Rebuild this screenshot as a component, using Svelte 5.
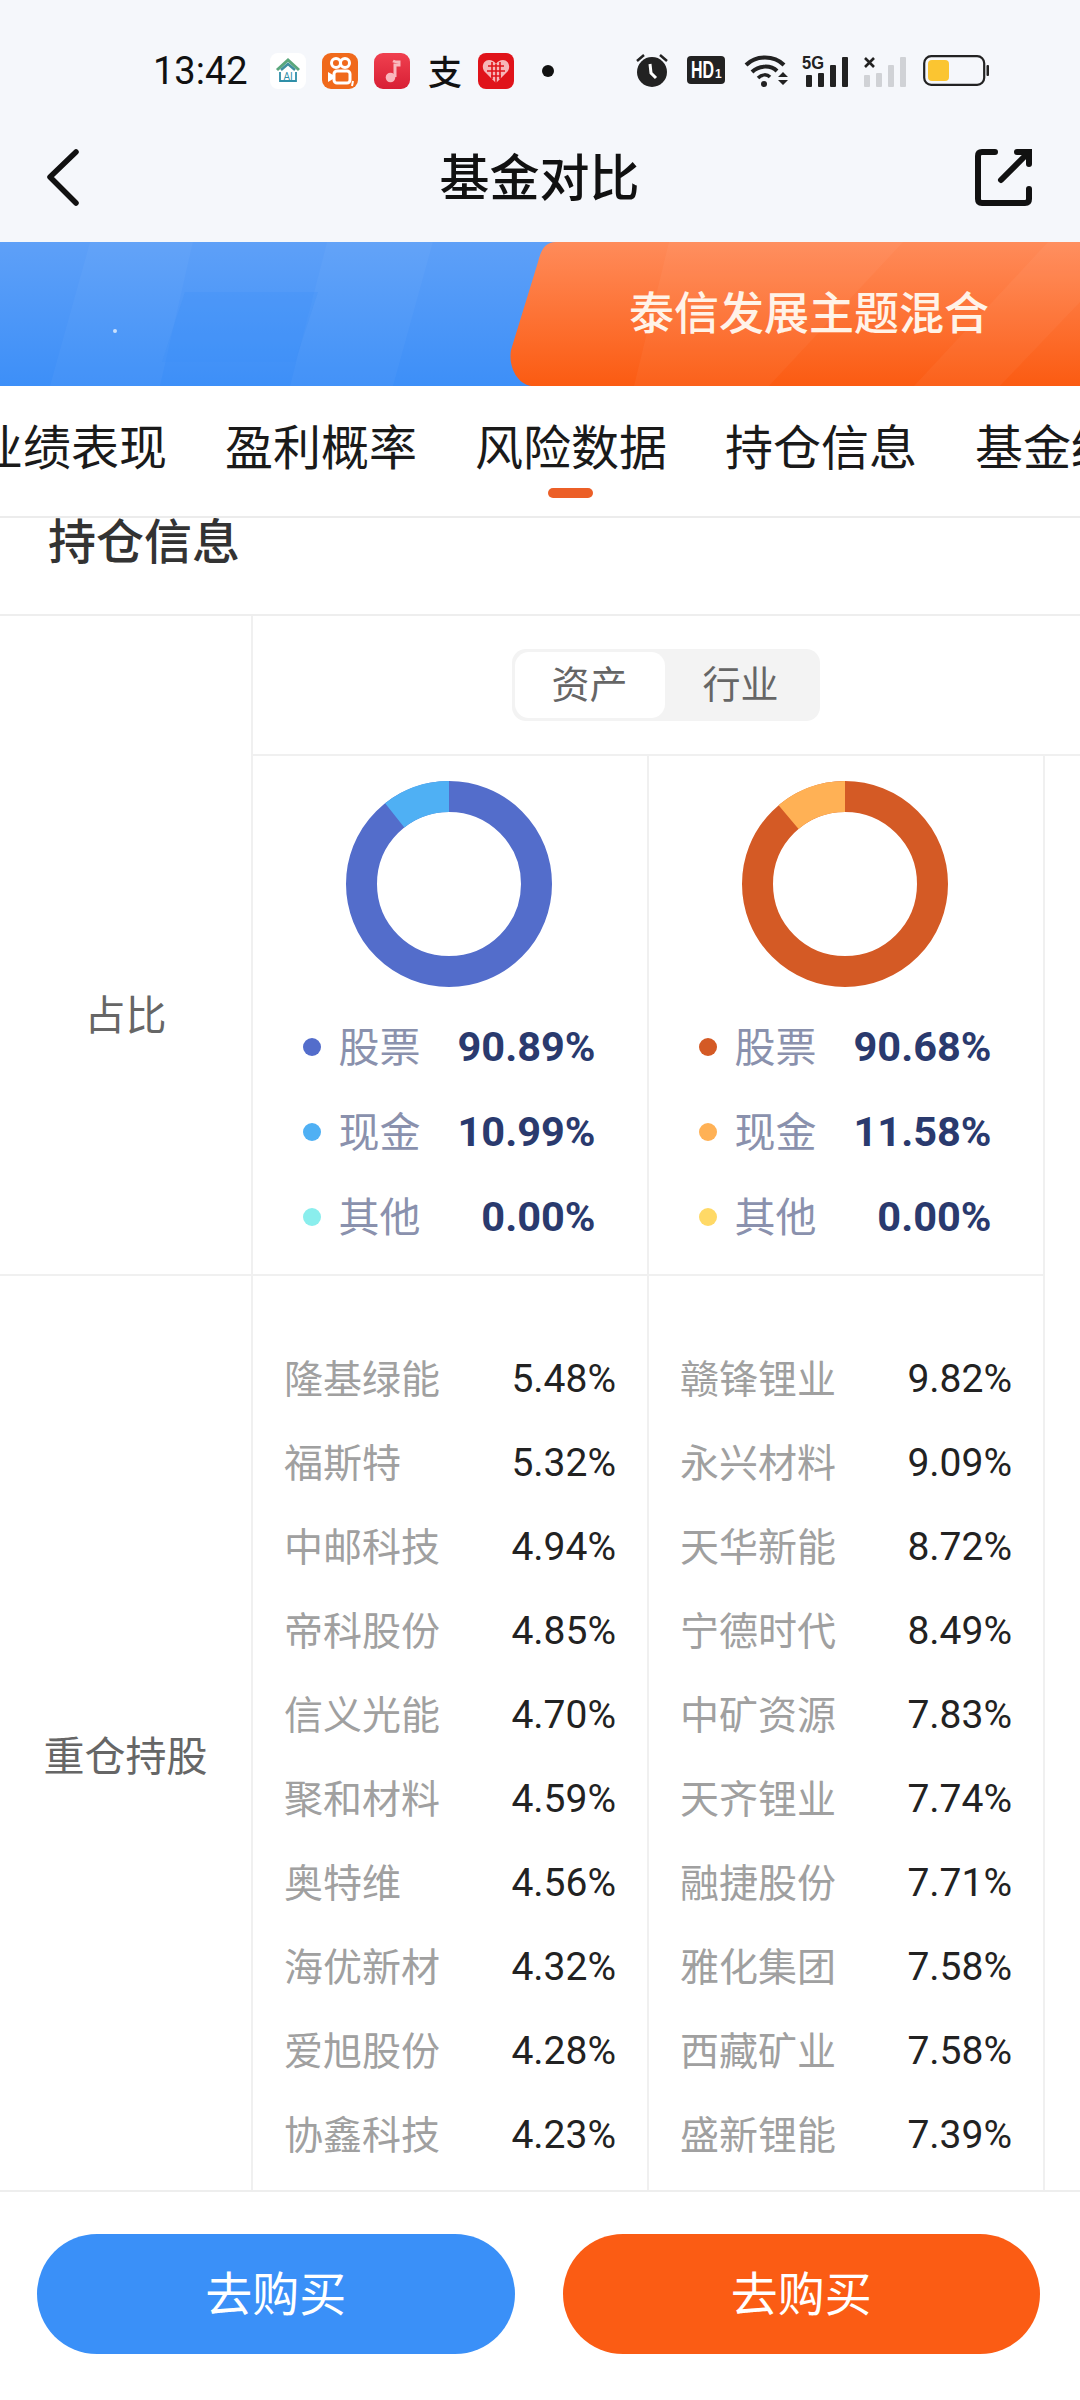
<script>
  const tabs = ['业绩表现', '盈利概率', '风险数据', '持仓信息', '基金经理'];

  const funds = [
    {
      colors: ['#536dcb', '#4fb0f4', '#8aeeed'],
      cashShare: 0.108,
      legend: [
        { name: '股票', value: '90.89%' },
        { name: '现金', value: '10.99%' },
        { name: '其他', value: '0.00%' }
      ],
      holdings: [
        ['隆基绿能', '5.48%'],
        ['福斯特', '5.32%'],
        ['中邮科技', '4.94%'],
        ['帝科股份', '4.85%'],
        ['信义光能', '4.70%'],
        ['聚和材料', '4.59%'],
        ['奥特维', '4.56%'],
        ['海优新材', '4.32%'],
        ['爱旭股份', '4.28%'],
        ['协鑫科技', '4.23%']
      ]
    },
    {
      colors: ['#d45a25', '#ffb155', '#ffd966'],
      cashShare: 0.113,
      legend: [
        { name: '股票', value: '90.68%' },
        { name: '现金', value: '11.58%' },
        { name: '其他', value: '0.00%' }
      ],
      holdings: [
        ['赣锋锂业', '9.82%'],
        ['永兴材料', '9.09%'],
        ['天华新能', '8.72%'],
        ['宁德时代', '8.49%'],
        ['中矿资源', '7.83%'],
        ['天齐锂业', '7.74%'],
        ['融捷股份', '7.71%'],
        ['雅化集团', '7.58%'],
        ['西藏矿业', '7.58%'],
        ['盛新锂能', '7.39%']
      ]
    }
  ];

  const radius = 87.5;
  const circumference = 2 * Math.PI * radius;
</script>

<div class="page">
  <div class="status">
    <span class="time">13:42</span>
    <div class="notif">
      <svg width="36" height="36" viewBox="0 0 36 36">
        <rect width="36" height="36" rx="8" fill="#fff" />
        <path d="M7 17 L18 7 L29 17" fill="none" stroke="#5aa77c" stroke-width="3" />
        <path d="M11 17 L18 11 L25 17" fill="none" stroke="#3f8f9f" stroke-width="2.5" />
        <path d="M10 19 V28 H26 V19" fill="none" stroke="#2f8fa8" stroke-width="1.8" />
        <text x="18" y="27" text-anchor="middle" class="ai">AI</text>
      </svg>
      <svg width="36" height="36" viewBox="0 0 36 36">
        <rect width="36" height="36" rx="9" fill="#f0691b" />
        <circle cx="14" cy="10" r="4.5" fill="none" stroke="#fff" stroke-width="3" />
        <circle cx="23" cy="10" r="4.5" fill="none" stroke="#fff" stroke-width="3" />
        <rect x="12" y="18" width="16" height="12" rx="3" fill="none" stroke="#fff" stroke-width="3" />
        <path d="M11 22 L6 19 V29 L11 26Z" fill="#fff" />
        <path d="M31 28 L30 33" stroke="#fff" stroke-width="2" />
      </svg>
      <svg width="36" height="36" viewBox="0 0 36 36">
        <defs>
          <linearGradient id="music" x1="0" y1="0" x2="0" y2="1">
            <stop offset="0" stop-color="#f0404f" />
            <stop offset="1" stop-color="#d81f35" />
          </linearGradient>
        </defs>
        <rect width="36" height="36" rx="9" fill="url(#music)" />
        <path d="M19 8 C21 9 24 9 25 9 V12 L21 12 V24" fill="none" stroke="#f9b7bd" stroke-width="3" />
        <circle cx="16.5" cy="24.5" r="4.8" fill="#f9b7bd" />
      </svg>
      <span class="pay">支</span>
      <svg width="36" height="36" viewBox="0 0 36 36">
        <rect width="36" height="36" rx="8" fill="#e0131a" />
        <path d="M18 30 L6 18 C3 13 6 7 11 7 C14 7 16 8 18 11 C20 8 22 7 25 7 C30 7 33 13 30 18Z" fill="#f6b6b8" />
        <path d="M10 13 H26 M9 18 H27 M13 23 H23 M14 9 V26 M18 11 V30 M22 9 V26" stroke="#e0131a" stroke-width="1.6" />
      </svg>
      <i class="dot"></i>
    </div>
    <div class="sys">
      <svg width="32" height="34" viewBox="0 0 32 34">
        <circle cx="16" cy="19" r="15" fill="#222" />
        <path d="M1 8 L8 2 M31 8 L24 2" stroke="#222" stroke-width="2.5" />
        <path d="M14 11 L15 20 L20 25" fill="none" stroke="#fff" stroke-width="3" />
      </svg>
      <svg class="hd" width="38" height="28" viewBox="0 0 38 28">
        <rect width="38" height="28" rx="4" fill="#222" />
        <text x="4" y="22" class="hd-main" textLength="23" lengthAdjust="spacingAndGlyphs">HD</text>
        <text x="28" y="22" class="hd-sub">1</text>
      </svg>
      <svg class="wifi" width="44" height="34" viewBox="0 0 44 34">
        <path d="M2 12 C12 2 30 2 40 12" fill="none" stroke="#222" stroke-width="4" />
        <path d="M8 19 C15 12 27 12 33 18" fill="none" stroke="#222" stroke-width="4" />
        <path d="M14 25 C18 21 23 21 26 24" fill="none" stroke="#222" stroke-width="3.5" />
        <circle cx="20" cy="31" r="3" fill="#222" />
        <path d="M34 24 H44 L39 19Z M34 27 H44 L39 32Z" fill="#222" />
      </svg>
      <svg width="46" height="34" viewBox="0 0 46 34">
        <text x="0" y="16" class="g5" textLength="22" lengthAdjust="spacingAndGlyphs">5G</text>
        <rect x="4" y="22" width="6" height="12" rx="1" fill="#222" />
        <rect x="16" y="20" width="6" height="14" rx="1" fill="#222" />
        <rect x="28" y="12" width="6" height="22" rx="1" fill="#222" />
        <rect x="40" y="4" width="6" height="30" rx="1" fill="#222" />
      </svg>
      <svg width="43" height="34" viewBox="0 0 43 34">
        <path d="M1 5 L10 14 M10 5 L1 14" stroke="#222" stroke-width="2.6" />
        <rect x="0" y="22" width="6" height="12" rx="1" fill="#d0d2d6" />
        <rect x="12" y="20" width="6" height="14" rx="1" fill="#d0d2d6" />
        <rect x="24" y="12" width="6" height="22" rx="1" fill="#d0d2d6" />
        <rect x="36" y="4" width="6" height="30" rx="1" fill="#d0d2d6" />
      </svg>
      <svg width="66" height="31" viewBox="0 0 66 31">
        <rect x="1.2" y="1.2" width="60" height="28.6" rx="7" fill="none" stroke="#222" stroke-width="2.2" />
        <rect x="5" y="5" width="21" height="21" rx="4" fill="#fbc531" />
        <rect x="63.5" y="10" width="2.5" height="11" rx="1" fill="#222" />
      </svg>
    </div>
  </div>

  <div class="nav">
    <svg width="34" height="58" viewBox="0 0 34 58">
      <path d="M30 4 L4 29 L30 55" fill="none" stroke="#111" stroke-width="5.5" stroke-linecap="round" stroke-linejoin="round" />
    </svg>
    <h1>基金对比</h1>
    <svg class="share" width="58" height="58" viewBox="0 0 58 58">
      <path d="M20 4 H7 Q3 4 3 8 V51 Q3 55 7 55 H50 Q54 55 54 51 V41" fill="none" stroke="#111" stroke-width="6" stroke-linecap="round" />
      <path d="M26 32 L52 6 M42 4 H54 V16" fill="none" stroke="#111" stroke-width="6" stroke-linecap="round" />
    </svg>
  </div>

  <div class="banner">
    <svg class="banner-bg" viewBox="0 0 1080 144" width="1080" height="144">
      <defs>
        <linearGradient id="blue" x1="0" y1="0" x2="0" y2="1">
          <stop offset="0" stop-color="#5ea0f8" />
          <stop offset="1" stop-color="#3d8ff8" />
        </linearGradient>
        <linearGradient id="orange" x1="0" y1="0" x2="0" y2="1">
          <stop offset="0" stop-color="#ff8b5a" />
          <stop offset="1" stop-color="#fb5b12" />
        </linearGradient>
      </defs>
      <rect width="1080" height="144" fill="url(#blue)" />
      <path d="M90 0 H193 L160 144 H50Z M327 0 H433 L393 144 H290Z" fill="#fff" opacity="0.03" />
      <path d="M162 120 H295 L318 50 H185Z" fill="#3d8ff8" opacity="0.25" />
      <circle cx="115" cy="89" r="2" fill="#fff" opacity="0.7" />
      <path d="M556 0 H1080 V144 H534 C518 144 508 125 511 108 L538 20 C541 8 545 0 556 0Z" fill="url(#orange)" />
      <path d="M669 0 H903 L769 144 H634Z M1048 0 H1080 V60 L1000 144 H914Z" fill="#fff" opacity="0.04" />
    </svg>
    <span class="banner-name">泰信发展主题混合</span>
  </div>

  <div class="tabs">
    {#each tabs as tab, i}
      <div class="tab" class:active={i === 2}>{tab}</div>
    {/each}
  </div>

  <div class="body">
    <div class="section-title">持仓信息</div>

    <div class="grid">
      <div class="head"></div>
      <div class="toggle-cell">
        <div class="toggle">
          <span class="on">资产</span>
          <span>行业</span>
        </div>
      </div>

      <div class="head ratio-head">占比</div>
      {#each funds as fund}
        <div class="cell ratio">
          <svg width="206" height="206" viewBox="0 0 206 206">
            <g transform="rotate(-90 103 103)" fill="none" stroke-width="31">
              <circle cx="103" cy="103" r={radius} stroke={fund.colors[0]} />
              <circle
                cx="103"
                cy="103"
                r={radius}
                stroke={fund.colors[1]}
                stroke-dasharray="{circumference * fund.cashShare} {circumference * (1 - fund.cashShare)}"
                stroke-dashoffset={circumference * fund.cashShare}
              />
            </g>
          </svg>
          <div class="legend">
            {#each fund.legend as row, i}
              <div class="legend-row">
                <i style="background:{fund.colors[i]}"></i>
                <span class="legend-name">{row.name}</span>
                <b>{row.value}</b>
              </div>
            {/each}
          </div>
        </div>
      {/each}
      <div class="spare"></div>

      <div class="head holdings-head">重仓持股</div>
      {#each funds as fund}
        <div class="cell holdings">
          {#each fund.holdings as [name, pct]}
            <div class="holding">
              <span class="holding-name">{name}</span>
              <span class="holding-pct">{pct}</span>
            </div>
          {/each}
        </div>
      {/each}
      <div class="spare"></div>
    </div>
  </div>

  <div class="footer">
    <button class="buy blue">去购买</button>
    <button class="buy orange">去购买</button>
  </div>
</div>

<style>
  :global(body) {
    background: #fff;
  }

  .page {
    width: 1080px;
    height: 2400px;
    display: flex;
    flex-direction: column;
    overflow: hidden;
    font-family: 'Noto Sans CJK SC', 'Noto Sans', sans-serif;
  }

  .status {
    height: 122px;
    padding: 53px 91px 0 153px;
    box-sizing: border-box;
    display: flex;
    align-items: flex-start;
    background: #f5f7fb;
  }

  .time {
    width: 117px;
    font-family: Roboto, sans-serif;
    font-size: 38px;
    line-height: 36px;
    color: #111;
  }

  .notif {
    display: flex;
    align-items: center;
    gap: 16px;
    height: 36px;
  }

  .pay {
    width: 34px;
    margin-left: 2px;
    font-size: 34px;
    line-height: 34px;
    font-weight: 500;
    color: #111;
  }

  .dot {
    width: 12px;
    height: 12px;
    margin-left: 12px;
    border-radius: 50%;
    background: #111;
  }

  .sys {
    margin-left: auto;
    display: flex;
    align-items: center;
    gap: 16px;
    height: 34px;
  }

  .hd {
    margin: 0 3px;
  }

  .wifi {
    margin-right: -2px;
  }

  .ai {
    font-family: Roboto, sans-serif;
    font-size: 10px;
    fill: #2f8fa8;
  }

  .hd-main {
    font-family: 'Liberation Sans', sans-serif;
    font-size: 23px;
    font-weight: 700;
    fill: #fff;
  }

  .hd-sub {
    font-family: 'Liberation Sans', sans-serif;
    font-size: 12px;
    font-weight: 700;
    fill: #fff;
  }

  .g5 {
    font-family: 'Liberation Sans', sans-serif;
    font-size: 19px;
    font-weight: 700;
    fill: #222;
  }

  .nav {
    height: 120px;
    padding: 0 47px 11px 46px;
    box-sizing: border-box;
    display: grid;
    grid-template-columns: 1fr auto 1fr;
    align-items: center;
    background: #f5f7fb;
  }

  .nav h1 {
    margin: 0 0 5px;
    font-size: 50px;
    line-height: 60px;
    font-weight: 500;
    color: #111;
  }

  .share {
    justify-self: end;
  }

  .banner {
    position: relative;
    height: 144px;
    padding: 0 91px 8px 0;
    box-sizing: border-box;
    display: flex;
    align-items: center;
    justify-content: flex-end;
    overflow: hidden;
  }

  .banner-bg {
    position: absolute;
    left: 0;
    top: 0;
  }

  .banner-name {
    position: relative;
    font-size: 45px;
    font-weight: 500;
    color: #fff3e8;
  }

  .tabs {
    height: 132px;
    padding: 34px 0 0;
    box-sizing: border-box;
    display: flex;
    gap: 58px;
    overflow: hidden;
    border-bottom: 2px solid #ececec;
    background: #fff;
  }

  .tab {
    position: relative;
    flex: none;
    font-size: 48px;
    line-height: 48px;
    color: #1a1a1a;
  }

  .tab:first-child {
    margin-left: -25px;
  }

  .tab.active::after {
    content: '';
    position: absolute;
    left: 73px;
    top: 68px;
    width: 45px;
    height: 10px;
    border-radius: 5px;
    background: #ec5f27;
  }

  .body {
    flex: 1;
    min-height: 0;
    overflow: hidden;
  }

  .section-title {
    height: 98px;
    padding-left: 48px;
    box-sizing: border-box;
    border-bottom: 2px solid #eeeeee;
    font-size: 48px;
    line-height: 40px;
    font-weight: 500;
    color: #333;
  }

  .grid {
    display: grid;
    grid-template-columns: 253px 396px 396px 35px;
    grid-template-rows: 140px 520px 962px;
  }

  .head {
    padding-bottom: 6px;
    box-sizing: border-box;
    display: flex;
    align-items: center;
    justify-content: center;
    border-right: 2px solid #f0f0f0;
    font-size: 41px;
    color: #666;
  }

  .ratio-head,
  .holdings-head {
    border-bottom: 2px solid #f0f0f0;
  }

  .toggle-cell {
    grid-column: 2 / 5;
    padding-right: 2px;
    display: flex;
    align-items: center;
    justify-content: center;
    border-bottom: 2px solid #f0f0f0;
  }

  .toggle {
    width: 308px;
    height: 72px;
    padding: 3px;
    box-sizing: border-box;
    display: flex;
    border-radius: 14px;
    background: #f3f3f3;
  }

  .toggle span {
    flex: 1;
    padding-bottom: 7px;
    box-sizing: border-box;
    display: flex;
    align-items: center;
    justify-content: center;
    border-radius: 14px;
    font-size: 38px;
    color: #666;
  }

  .toggle .on {
    flex: none;
    width: 150px;
    background: #fff;
  }

  .cell {
    box-sizing: border-box;
    border-right: 2px solid #f0f0f0;
    border-bottom: 2px solid #f0f0f0;
  }

  .ratio {
    padding: 25px 52px 0 49px;
    display: flex;
    flex-direction: column;
    align-items: center;
  }

  .legend {
    width: 100%;
    margin-top: 17px;
    padding-right: 1px;
    margin-right: -2px;
    box-sizing: content-box;
  }

  .legend-row {
    height: 85px;
    display: flex;
    align-items: center;
  }

  .legend-row i {
    width: 18px;
    height: 18px;
    margin-right: 18px;
    border-radius: 50%;
  }

  .legend-name {
    padding-bottom: 6px;
    font-size: 41px;
    color: #8a91ad;
  }

  .legend-row b {
    margin-left: auto;
    font-family: Roboto, sans-serif;
    font-size: 41.5px;
    font-weight: 700;
    color: #2a3a6e;
  }

  .holdings {
    padding: 61px 31px 0;
  }

  .holding {
    height: 84px;
    display: flex;
    align-items: center;
    justify-content: space-between;
  }

  .holding-name {
    padding-bottom: 6px;
    font-size: 39px;
    color: #a0a0a0;
  }

  .holding-pct {
    font-family: Roboto, sans-serif;
    font-size: 39px;
    color: #222;
  }

  .footer {
    position: relative;
    height: 210px;
    padding: 42px 40px 0 37px;
    box-sizing: border-box;
    display: flex;
    gap: 48px;
    border-top: 2px solid #eeeeee;
    background: #fff;
  }

  .buy {
    flex: 1;
    height: 120px;
    padding: 0 0 8px;
    border: none;
    border-radius: 60px;
    font-family: inherit;
    font-size: 47px;
    color: #fff;
  }

  .blue {
    background: #3a90f8;
  }

  .orange {
    background: #fb5c14;
  }
</style>
